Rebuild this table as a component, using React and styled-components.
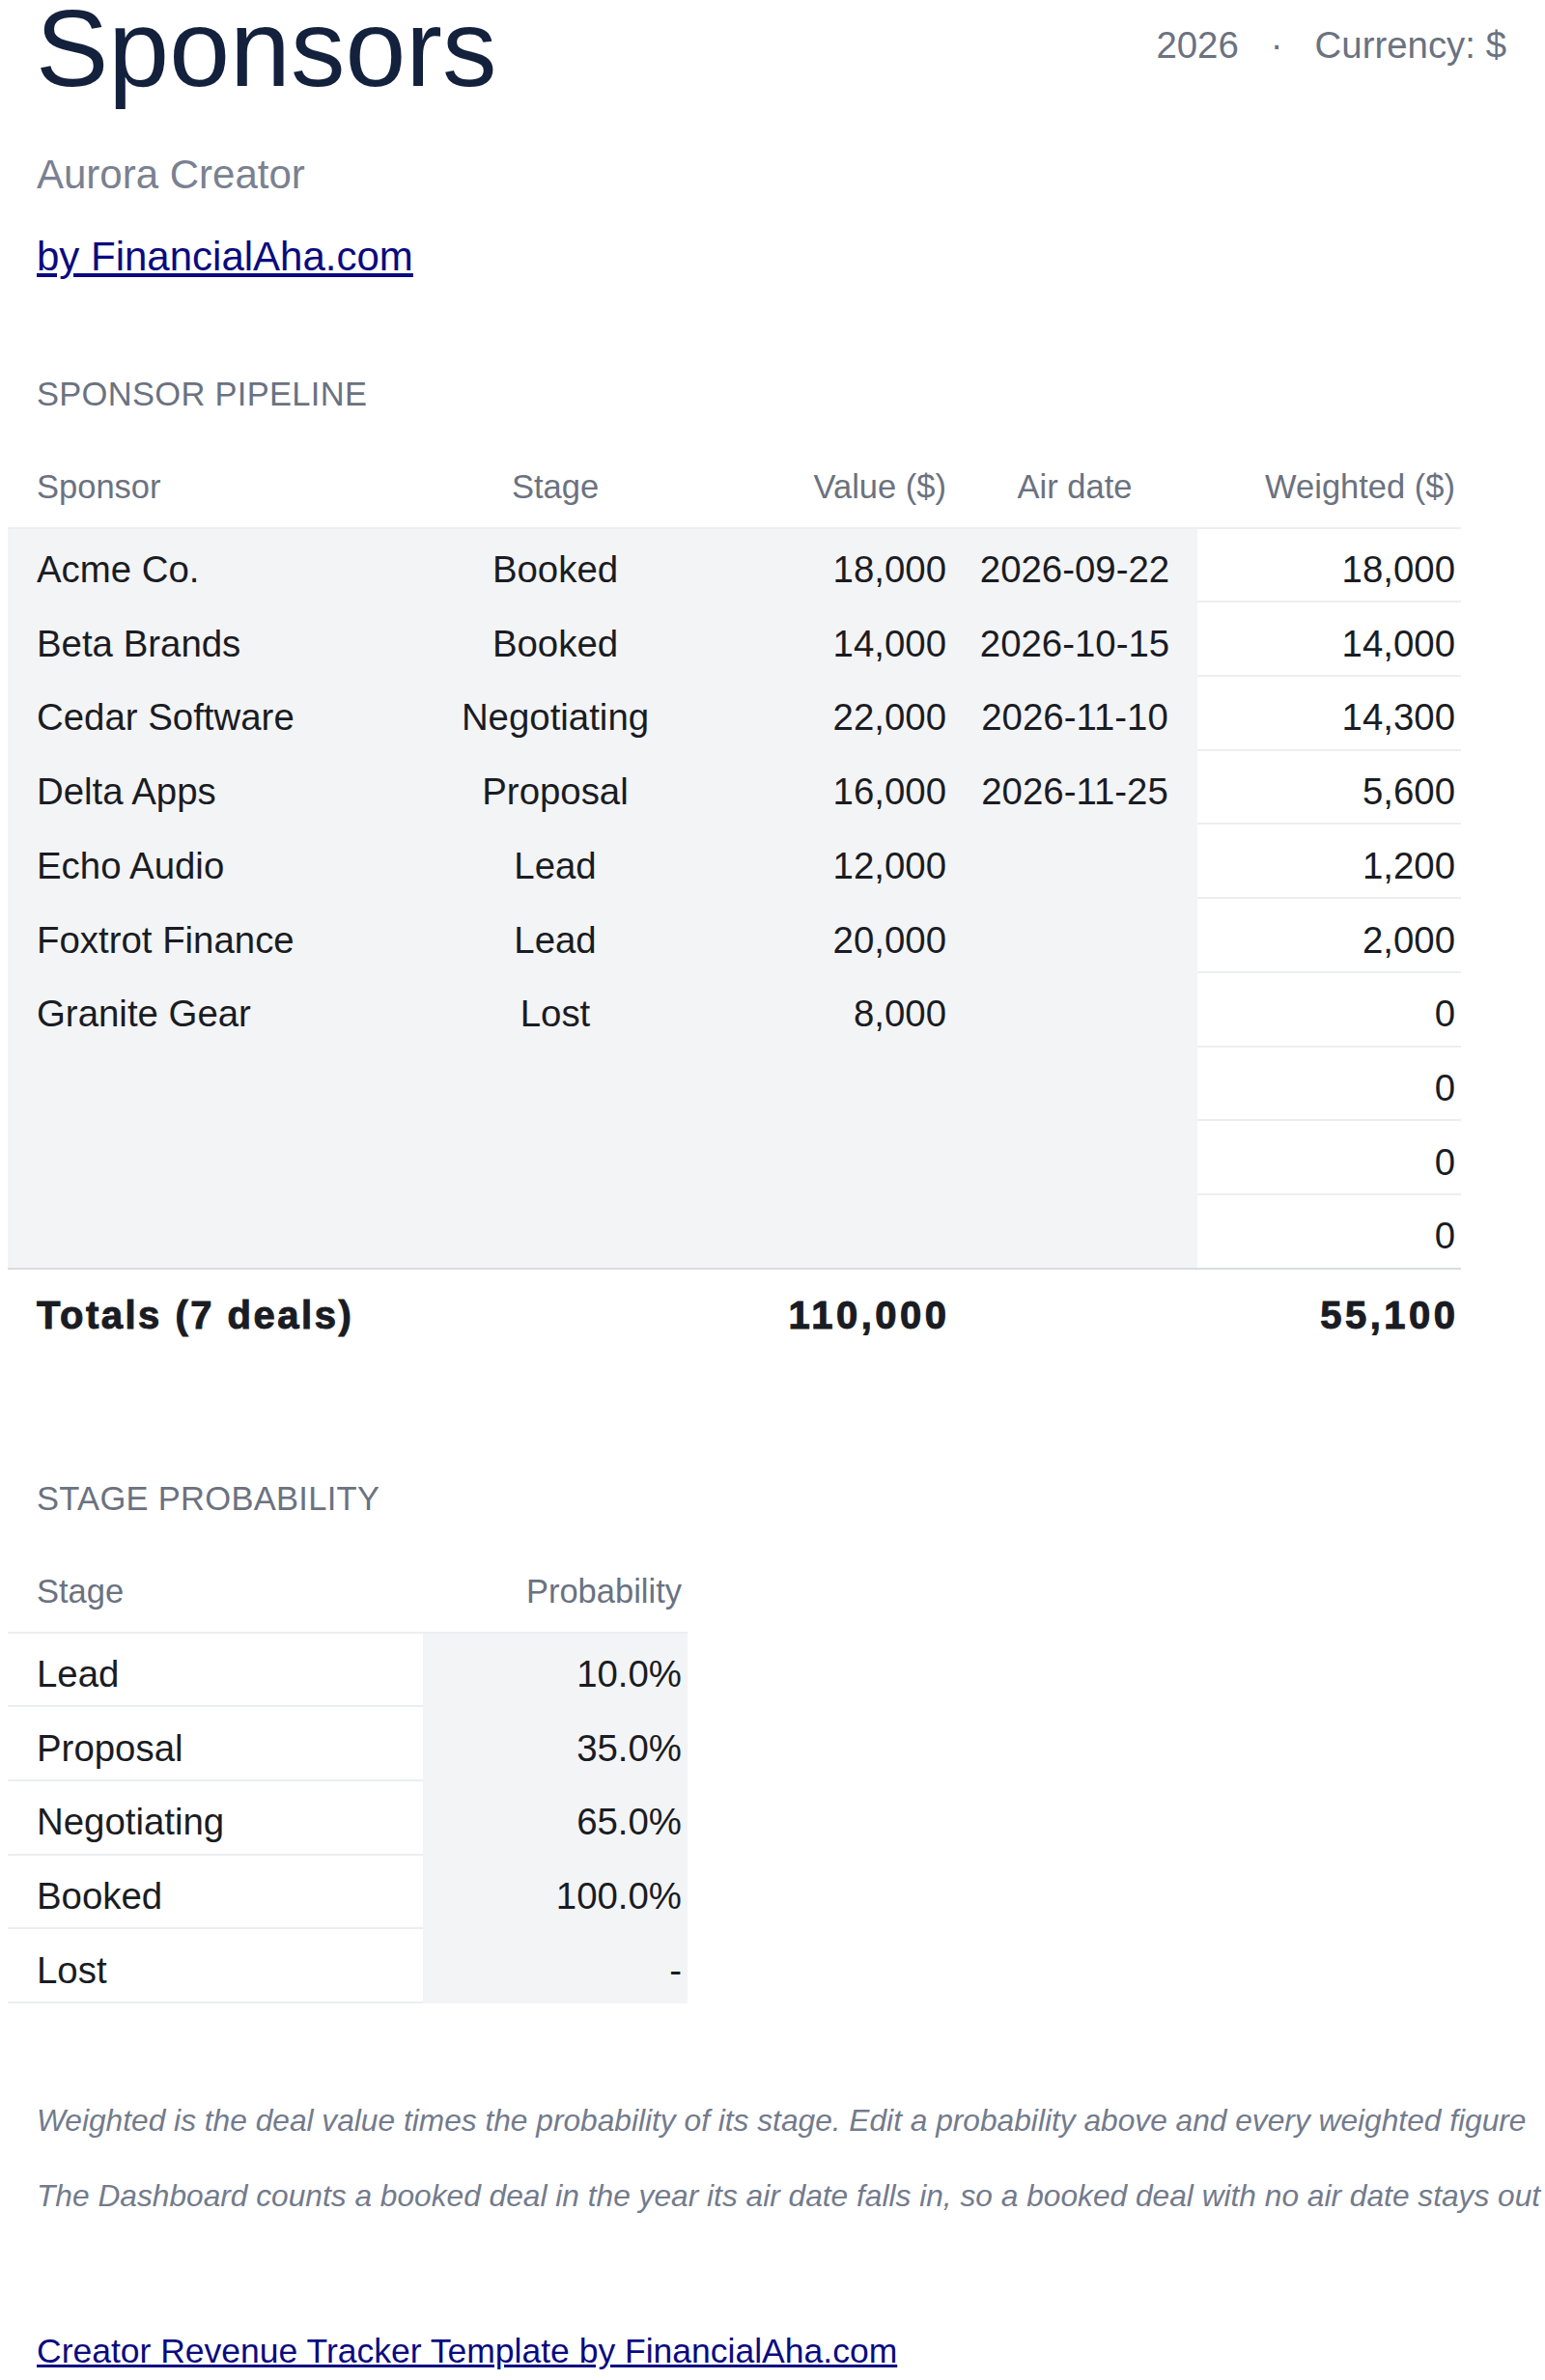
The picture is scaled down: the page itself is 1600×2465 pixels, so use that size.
import React from 'react'
import styled, { createGlobalStyle } from 'styled-components'

const GlobalStyle = createGlobalStyle`
  html {
    overflow-x: hidden;
  }
  body {
    margin: 0;
    background: #ffffff;
    font-family: "Liberation Sans", Arial, sans-serif;
    color: #1a1c23;
  }
`

const deals = [
  { sponsor: 'Acme Co.', stage: 'Booked', value: '18,000', date: '2026-09-22', weighted: '18,000' },
  { sponsor: 'Beta Brands', stage: 'Booked', value: '14,000', date: '2026-10-15', weighted: '14,000' },
  { sponsor: 'Cedar Software', stage: 'Negotiating', value: '22,000', date: '2026-11-10', weighted: '14,300' },
  { sponsor: 'Delta Apps', stage: 'Proposal', value: '16,000', date: '2026-11-25', weighted: '5,600' },
  { sponsor: 'Echo Audio', stage: 'Lead', value: '12,000', date: '', weighted: '1,200' },
  { sponsor: 'Foxtrot Finance', stage: 'Lead', value: '20,000', date: '', weighted: '2,000' },
  { sponsor: 'Granite Gear', stage: 'Lost', value: '8,000', date: '', weighted: '0' },
  { sponsor: '', stage: '', value: '', date: '', weighted: '0' },
  { sponsor: '', stage: '', value: '', date: '', weighted: '0' },
  { sponsor: '', stage: '', value: '', date: '', weighted: '0' }
]

const stages = [
  { stage: 'Lead', prob: '10.0%' },
  { stage: 'Proposal', prob: '35.0%' },
  { stage: 'Negotiating', prob: '65.0%' },
  { stage: 'Booked', prob: '100.0%' },
  { stage: 'Lost', prob: '-' }
]

class App extends React.Component {
  render () {
    return (
      <Page>
        <GlobalStyle />
        <Masthead>
          <TopRow>
            <Title>Sponsors</Title>
            <Meta>
              <span>2026</span>
              <span>·</span>
              <span>Currency: $</span>
            </Meta>
          </TopRow>
          <Subtitle>Aurora Creator</Subtitle>
          <BrandLink href="#">by FinancialAha.com</BrandLink>
        </Masthead>

        <SectionLabel $top={98.5}>SPONSOR PIPELINE</SectionLabel>
        <Table $width={1505}>
          <colgroup>
            <col style={{ width: 392 }} />
            <col style={{ width: 350 }} />
            <col style={{ width: 236 }} />
            <col style={{ width: 254 }} />
            <col style={{ width: 273 }} />
          </colgroup>
          <thead>
            <tr>
              <HeadCell $first>Sponsor</HeadCell>
              <HeadCell $align="center">Stage</HeadCell>
              <HeadCell $align="right">Value ($)</HeadCell>
              <HeadCell $align="center">Air date</HeadCell>
              <HeadCell $align="right">Weighted ($)</HeadCell>
            </tr>
          </thead>
          <tbody>
            {deals.map((d, i) => (
              <Row key={i}>
                <Cell $first $input>{d.sponsor}</Cell>
                <Cell $align="center" $input>{d.stage}</Cell>
                <Cell $align="right" $input>{d.value}</Cell>
                <Cell $align="center" $input>{d.date}</Cell>
                <Cell $align="right">{d.weighted}</Cell>
              </Row>
            ))}
          </tbody>
          <tfoot>
            <tr>
              <TotalCell $first>Totals (7 deals)</TotalCell>
              <TotalCell />
              <TotalCell $align="right" $num>110,000</TotalCell>
              <TotalCell />
              <TotalCell $align="right" $num>55,100</TotalCell>
            </tr>
          </tfoot>
        </Table>

        <SectionLabel $top={121}>STAGE PROBABILITY</SectionLabel>
        <Table $width={704}>
          <colgroup>
            <col style={{ width: 430 }} />
            <col style={{ width: 274 }} />
          </colgroup>
          <thead>
            <tr>
              <HeadCell $first>Stage</HeadCell>
              <HeadCell $align="right">Probability</HeadCell>
            </tr>
          </thead>
          <tbody>
            {stages.map(s => (
              <tr key={s.stage}>
                <Cell $first>{s.stage}</Cell>
                <Cell $align="right" $input>{s.prob}</Cell>
              </tr>
            ))}
          </tbody>
        </Table>

        <Notes>
          <Note>Weighted is the deal value times the probability of its stage. Edit a probability above and every weighted figure</Note>
          <Note>The Dashboard counts a booked deal in the year its air date falls in, so a booked deal with no air date stays out of the totals.</Note>
        </Notes>

        <Footer>
          <FooterLink href="#">Creator Revenue Tracker Template by FinancialAha.com</FooterLink>
        </Footer>
      </Page>
    )
  }
}

const Page = styled.div`
  padding: 0 40px 9px 8px;
`

const Masthead = styled.header`
  display: flex;
  flex-direction: column;
  align-items: flex-start;
  padding-left: 30px;
`

const TopRow = styled.div`
  display: flex;
  justify-content: space-between;
  align-items: flex-start;
  align-self: stretch;
`

const Title = styled.h1`
  margin: 0 0 0 -1px;
  font-size: 113px;
  line-height: 0.9;
  font-weight: 400;
  color: #14213d;
`

const Meta = styled.div`
  display: flex;
  gap: 33px;
  margin-top: 25px;
  font-size: 38.4px;
  color: #6b7280;
`

const Subtitle = styled.div`
  margin-top: 55px;
  font-size: 42px;
  color: #7a8191;
`

const BrandLink = styled.a`
  margin-top: 37.5px;
  font-size: 42px;
  color: #0a0a80;
  text-decoration: underline;
`

const SectionLabel = styled.h2`
  margin: ${p => p.$top}px 0 35px;
  padding-left: 30px;
  font-size: 34.5px;
  font-weight: 400;
  letter-spacing: 0.3px;
  color: #6b7280;
`

const Table = styled.table`
  width: ${p => p.$width}px;
  table-layout: fixed;
  border-collapse: separate;
  border-spacing: 0;
`

const HeadCell = styled.th`
  padding: 22px 6px 22px ${p => (p.$first ? 30 : 6)}px;
  border-bottom: 2px solid #eceef1;
  font-size: 34.5px;
  font-weight: 400;
  color: #6b7280;
  text-align: ${p => p.$align || 'left'};
  white-space: nowrap;
`

const Row = styled.tr`
  &:last-child td {
    border-bottom: none;
  }
`

const Cell = styled.td`
  padding: 20.4px 6px 10.3px ${p => (p.$first ? 30 : 6)}px;
  border-bottom: 2px solid ${p => (p.$input ? 'transparent' : '#eceef1')};
  background: ${p => (p.$input ? '#f3f4f6' : '#ffffff')};
  font-size: 38.4px;
  line-height: normal;
  text-align: ${p => p.$align || 'left'};
  white-space: nowrap;
`

const TotalCell = styled.td`
  padding: 25px ${p => (p.$align === 'right' ? 2.5 : 6)}px 27px ${p => (p.$first ? 30 : 6)}px;
  border-top: 2px solid #d9dbe1;
  font-size: 40px;
  font-weight: 700;
  letter-spacing: ${p => (p.$num ? 3.5 : 2.5)}px;
  -webkit-text-stroke: 1px #1a1c23;
  text-align: ${p => p.$align || 'left'};
  white-space: nowrap;
`

const Notes = styled.div`
  display: flex;
  flex-direction: column;
  gap: 40.5px;
  margin-top: 103px;
  padding-left: 30px;
`

const Note = styled.p`
  margin: 0;
  font-size: 31.7px;
  font-style: italic;
  color: #737b8c;
  white-space: nowrap;
`

const Footer = styled.footer`
  margin-top: 122.5px;
  padding-left: 30px;
`

const FooterLink = styled.a`
  font-size: 35.5px;
  color: #0a0a80;
  text-decoration: underline;
`

export default App
